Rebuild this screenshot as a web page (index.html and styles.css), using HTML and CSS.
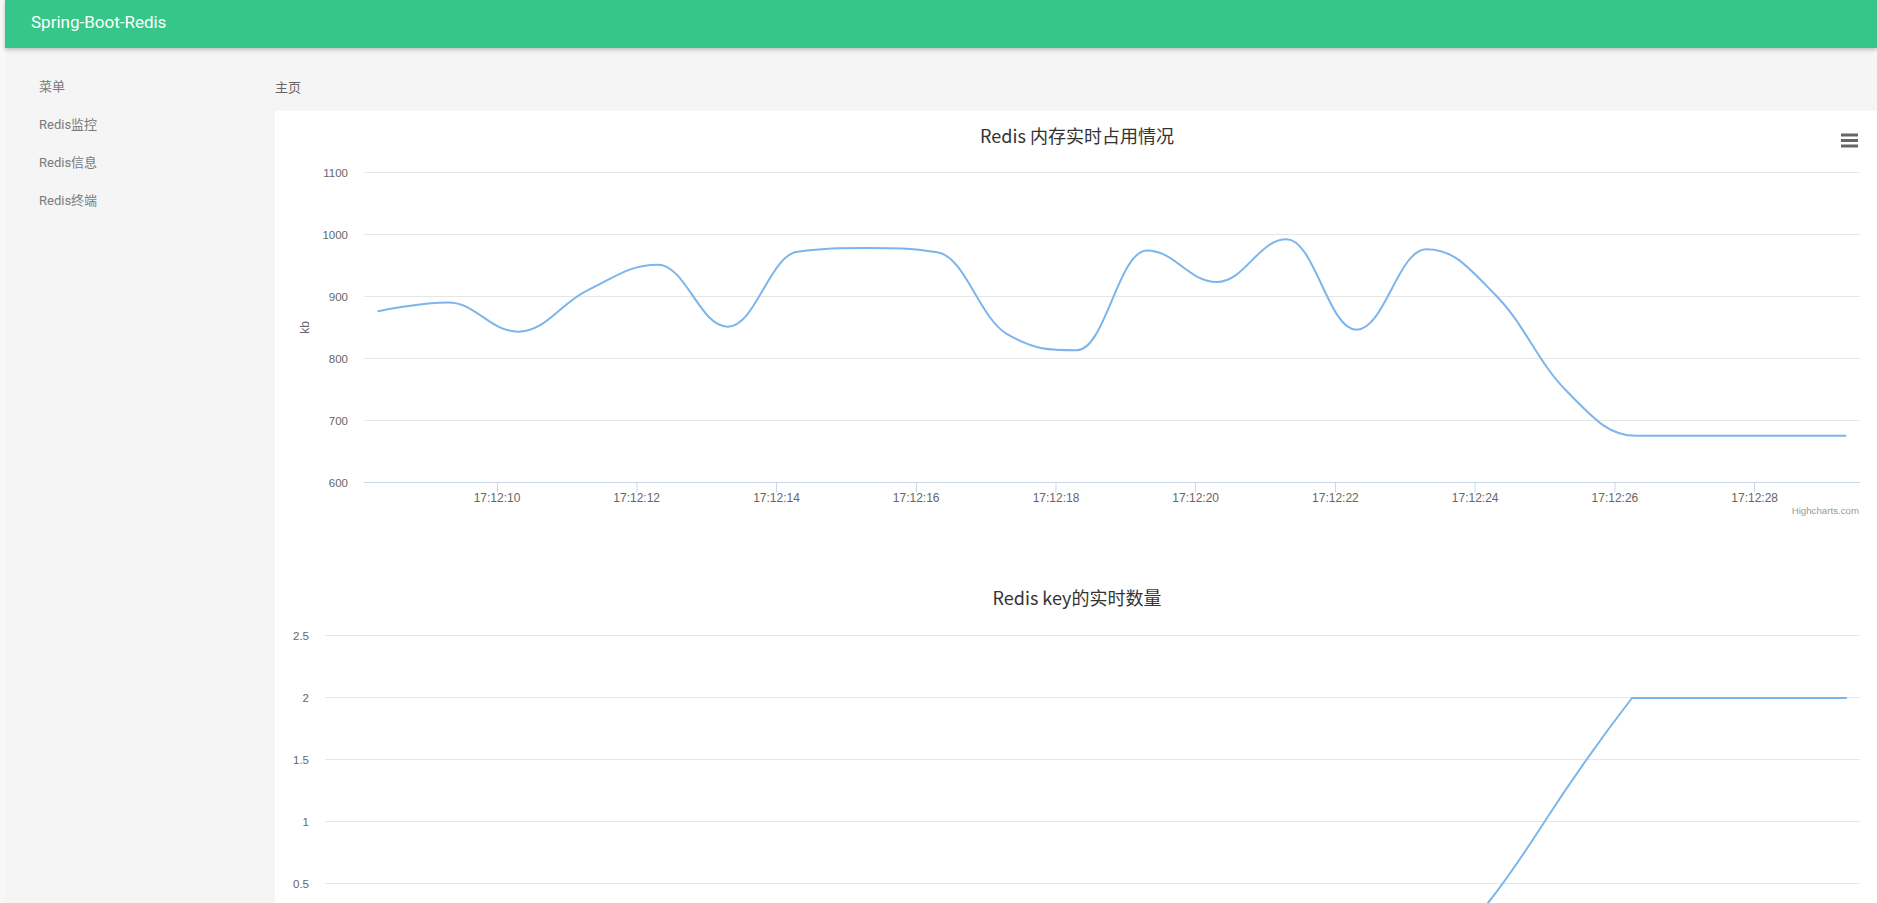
FILE: index.html
```html
<!DOCTYPE html>
<html lang="zh">
<head>
<meta charset="utf-8">
<title>Spring-Boot-Redis</title>
<link rel="stylesheet" href="styles.css">
</head>
<body>
<div class="app">
  <header class="topbar"><span class="brand">Spring-Boot-Redis</span></header>
  <div class="layout">
    <nav class="sidebar">
      <a class="nav-item">菜单</a>
      <a class="nav-item">Redis监控</a>
      <a class="nav-item">Redis信息</a>
      <a class="nav-item">Redis终端</a>
    </nav>
    <main class="content">
      <div class="breadcrumb">主页</div>
      <section class="card">
        <svg class="chart" width="1602" height="462" viewBox="0 0 1602 462">
          <text class="chart-title" x="802" y="32" text-anchor="middle">Redis 内存实时占用情况</text>
          <g class="menu-icon">
            <line x1="1566" y1="24" x2="1583" y2="24"/>
            <line x1="1566" y1="29.5" x2="1583" y2="29.5"/>
            <line x1="1566" y1="35" x2="1583" y2="35"/>
          </g>
          <g class="grid">
            <line x1="89" y1="61.5" x2="1585" y2="61.5"/>
            <line x1="89" y1="123.5" x2="1585" y2="123.5"/>
            <line x1="89" y1="185.5" x2="1585" y2="185.5"/>
            <line x1="89" y1="247.5" x2="1585" y2="247.5"/>
            <line x1="89" y1="309.5" x2="1585" y2="309.5"/>
          </g>
          <g class="axis">
            <line x1="89" y1="371.5" x2="1585" y2="371.5"/>
            <line x1="222.5" y1="371.5" x2="222.5" y2="381.5"/>
            <line x1="362" y1="371.5" x2="362" y2="381.5"/>
            <line x1="501.5" y1="371.5" x2="501.5" y2="381.5"/>
            <line x1="641.5" y1="371.5" x2="641.5" y2="381.5"/>
            <line x1="781" y1="371.5" x2="781" y2="381.5"/>
            <line x1="920.5" y1="371.5" x2="920.5" y2="381.5"/>
            <line x1="1060.5" y1="371.5" x2="1060.5" y2="381.5"/>
            <line x1="1200" y1="371.5" x2="1200" y2="381.5"/>
            <line x1="1340" y1="371.5" x2="1340" y2="381.5"/>
            <line x1="1479.5" y1="371.5" x2="1479.5" y2="381.5"/>
          </g>
          <g class="y-labels" text-anchor="end">
            <text x="73" y="65.8">1100</text>
            <text x="73" y="127.8">1000</text>
            <text x="73" y="189.8">900</text>
            <text x="73" y="251.8">800</text>
            <text x="73" y="313.8">700</text>
            <text x="73" y="375.8">600</text>
          </g>
          <text class="axis-title" x="34" y="216.5" text-anchor="middle" transform="rotate(-90 34 216.5)">kb</text>
          <g class="x-labels" text-anchor="middle">
            <text x="222" y="390.7">17:12:10</text>
            <text x="361.7" y="390.7">17:12:12</text>
            <text x="501.5" y="390.7">17:12:14</text>
            <text x="641.2" y="390.7">17:12:16</text>
            <text x="781" y="390.7">17:12:18</text>
            <text x="920.7" y="390.7">17:12:20</text>
            <text x="1060.4" y="390.7">17:12:22</text>
            <text x="1200.2" y="390.7">17:12:24</text>
            <text x="1339.9" y="390.7">17:12:26</text>
            <text x="1479.7" y="390.7">17:12:28</text>
          </g>
          <path id="mem-series" class="series" d=""/>
          <text class="credits" x="1584" y="402.5" text-anchor="end">Highcharts.com</text>
        </svg>
        <svg class="chart" width="1602" height="330" viewBox="0 0 1602 330">
          <text class="chart-title" x="802" y="32" text-anchor="middle">Redis key的实时数量</text>
          <g class="grid">
            <line x1="50" y1="62.5" x2="1585" y2="62.5"/>
            <line x1="50" y1="124.5" x2="1585" y2="124.5"/>
            <line x1="50" y1="186.5" x2="1585" y2="186.5"/>
            <line x1="50" y1="248.5" x2="1585" y2="248.5"/>
            <line x1="50" y1="310.5" x2="1585" y2="310.5"/>
          </g>
          <g class="y-labels" text-anchor="end">
            <text x="34" y="66.8">2.5</text>
            <text x="34" y="128.8">2</text>
            <text x="34" y="190.8">1.5</text>
            <text x="34" y="252.8">1</text>
            <text x="34" y="314.8">0.5</text>
          </g>
          <path class="series" d="M1150 372.5 C1175 372.5 1195 352 1213 330 C1235 302 1252 276 1270 248 C1292 214 1330 160 1357 125 L1571 125"/>
        </svg>
      </section>
    </main>
  </div>
</div>
<script src="chart.js"></script>
</body>
</html>
```

FILE: styles.css
```css
html, body {
  margin: 0;
  height: 100%;
  overflow: hidden;
}

body {
  background: #f8f8f8;
  font-family: Roboto, "Noto Sans CJK SC", sans-serif;
}

.app {
  margin-left: 5px;
  height: 100%;
  display: flex;
  flex-direction: column;
  background: #f5f5f5;
}

.topbar {
  height: 48px;
  flex: none;
  box-sizing: border-box;
  padding: 0 0 4px 26px;
  display: flex;
  align-items: center;
  background: #36c68a;
  box-shadow: 0 2px 4px rgba(0, 0, 0, 0.22);
  position: relative;
  z-index: 1;
}

.brand {
  color: #ffffff;
  font-size: 17px;
}

.layout {
  flex: 1;
  display: flex;
  min-height: 0;
}

.sidebar {
  width: 270px;
  flex: none;
  padding-top: 20px;
  display: flex;
  flex-direction: column;
}

.nav-item {
  display: block;
  height: 38px;
  line-height: 38px;
  padding-left: 34px;
  font-size: 13px;
  color: #7a7a7a;
}

.content {
  flex: 1;
  min-width: 0;
  display: flex;
  flex-direction: column;
}

.breadcrumb {
  flex: none;
  height: 63px;
  box-sizing: border-box;
  padding-top: 30px;
  line-height: 20px;
  font-size: 13px;
  color: #666666;
}

.card {
  flex: 1 0 auto;
  background: #ffffff;
  overflow: hidden;
}

.chart {
  display: block;
  overflow: hidden;
}

.chart-title {
  font-family: "Noto Sans CJK SC", sans-serif;
  font-size: 18px;
  fill: #333333;
}

.menu-icon line {
  stroke: #666666;
  stroke-width: 3;
}

.grid line {
  stroke: #e6e6e6;
  stroke-width: 1;
}

.axis line {
  stroke: #ccd6eb;
  stroke-width: 1;
}

.y-labels text {
  font-family: "Liberation Sans", Arial, sans-serif;
  font-size: 11.5px;
  fill: #666666;
}

.x-labels text {
  font-family: "Liberation Sans", Arial, sans-serif;
  font-size: 12px;
  fill: #666666;
}

.axis-title {
  font-family: "Liberation Sans", Arial, sans-serif;
  font-size: 12px;
  fill: #666666;
}

.credits {
  font-family: "Liberation Sans", Arial, sans-serif;
  font-size: 9.7px;
  fill: #999999;
}

.series {
  fill: none;
  stroke: #7cb5ec;
  stroke-width: 2;
  stroke-linejoin: round;
  stroke-linecap: round;
}
```

FILE: chart.js
```js
(function () {
  var values = [876, 890, 843, 910, 951, 851, 972, 978, 971, 839, 813,
                974, 923, 992, 846, 976, 901, 748, 675, 675, 675, 675];
  var x0 = 103.3, dx = 69.87, yBase = 371.3, scale = 0.62;

  var pts = values.map(function (v, i) {
    return { x: x0 + i * dx, y: yBase - (v - 600) * scale };
  });

  function splinePath(points) {
    var s = 1.5, d = s + 1;
    points.forEach(function (p, i) {
      var last = points[i - 1], next = points[i + 1];
      if (!last || !next) return;
      var lcx = (s * p.x + last.x) / d, lcy = (s * p.y + last.y) / d;
      var rcx = (s * p.x + next.x) / d, rcy = (s * p.y + next.y) / d;
      var corr = 0;
      if (rcx !== lcx) corr = ((rcy - lcy) * (rcx - p.x)) / (rcx - lcx) + p.y - rcy;
      lcy += corr; rcy += corr;
      if (lcy > last.y && lcy > p.y) { lcy = Math.max(last.y, p.y); rcy = 2 * p.y - lcy; }
      else if (lcy < last.y && lcy < p.y) { lcy = Math.min(last.y, p.y); rcy = 2 * p.y - lcy; }
      if (rcy > next.y && rcy > p.y) { rcy = Math.max(next.y, p.y); lcy = 2 * p.y - rcy; }
      else if (rcy < next.y && rcy < p.y) { rcy = Math.min(next.y, p.y); lcy = 2 * p.y - rcy; }
      p.lcx = lcx; p.lcy = lcy; p.rcx = rcx; p.rcy = rcy;
    });
    var out = 'M' + points[0].x.toFixed(2) + ' ' + points[0].y.toFixed(2);
    for (var i = 1; i < points.length; i++) {
      var a = points[i - 1], b = points[i];
      var c1x = a.rcx !== undefined ? a.rcx : a.x, c1y = a.rcy !== undefined ? a.rcy : a.y;
      var c2x = b.lcx !== undefined ? b.lcx : b.x, c2y = b.lcy !== undefined ? b.lcy : b.y;
      out += ' C' + [c1x, c1y, c2x, c2y, b.x, b.y].map(function (n) { return n.toFixed(2); }).join(' ');
    }
    return out;
  }

  document.getElementById('mem-series').setAttribute('d', splinePath(pts));
})();
```
